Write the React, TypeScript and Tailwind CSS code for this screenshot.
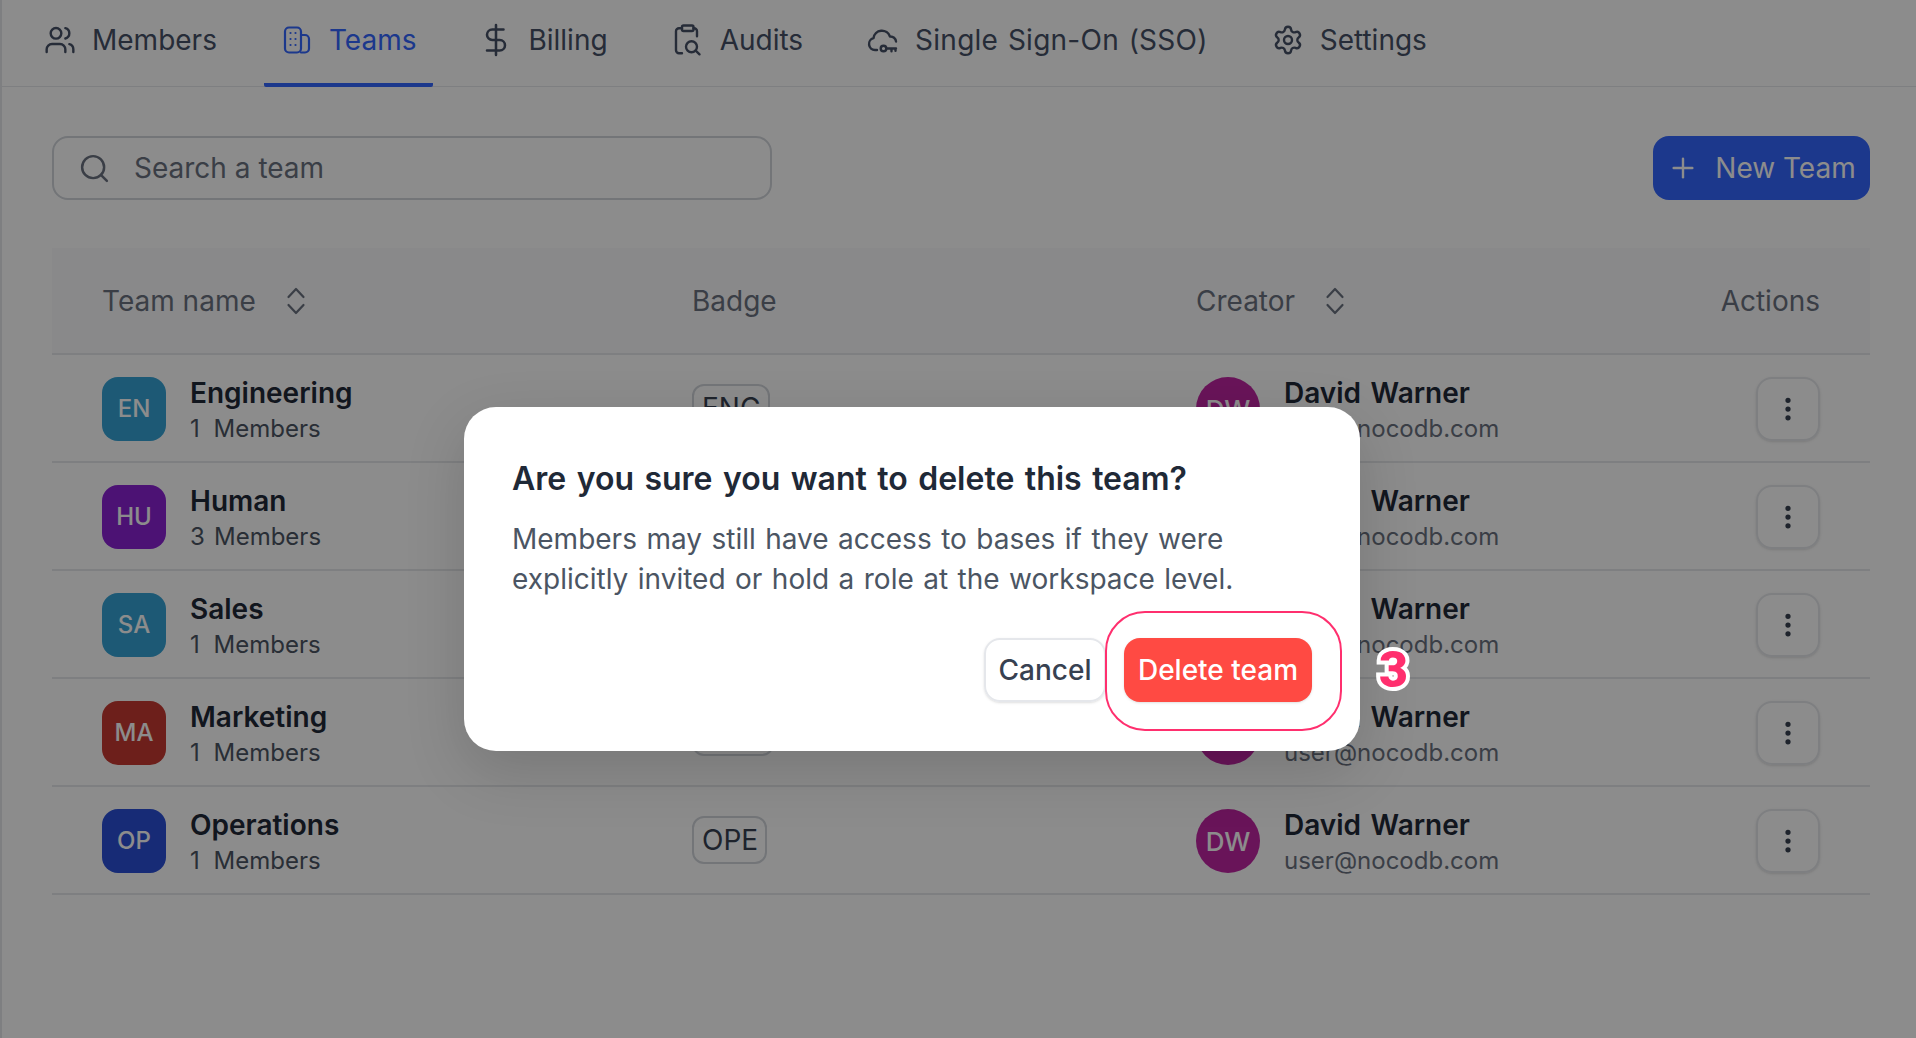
import React from "react";
import { Users, DollarSign, Settings, Search, Plus, MoreVertical } from "lucide-react";

const font = { fontFamily: "Inter, sans-serif" };

const BuildingIcon = () => (
  <svg width="32" height="32" viewBox="0 0 32 32" fill="none" stroke="currentColor" strokeWidth="2.2" strokeLinecap="round" strokeLinejoin="round">
    <rect x="4" y="3.5" width="16" height="25" rx="4" />
    <path d="M20 11h4a4 4 0 0 1 4 4v9.5a4 4 0 0 1-4 4h-4" />
    <path d="M9.5 9h.01M14.5 9h.01M9.5 15h.01M14.5 15h.01M9.5 21h.01M14.5 21h.01" />
  </svg>
);

const AuditIcon = () => (
  <svg width="32" height="32" viewBox="0 0 32 32" fill="none" stroke="currentColor" strokeWidth="2.4" strokeLinecap="round" strokeLinejoin="round">
    <rect x="10" y="1.5" width="11.5" height="5.5" rx="1.5" />
    <path d="M21.5 4.3H22a3 3 0 0 1 3 3v5" />
    <path d="M10 4.3H7a3 3 0 0 0-3 3v19a3 3 0 0 0 3 3h3" />
    <circle cx="19.5" cy="22.7" r="5.5" />
    <path d="M23.7 26.7l3.8 3.6" />
  </svg>
);

const CloudKeyIcon = () => (
  <svg width="32" height="32" viewBox="0 0 32 32" fill="none" stroke="currentColor" strokeWidth="2.4" strokeLinecap="round" strokeLinejoin="round">
    <path d="M10 26H8a6 6 0 0 1-1.5-11.8A8.5 8.5 0 0 1 23 12.5a5.5 5.5 0 0 1 6 5" />
    <circle cx="16.5" cy="24.5" r="2.8" />
    <path d="M19.5 24.5H29M24.5 24.5v2.8M28.5 24.5v2.2" />
  </svg>
);

const SortIcon = () => (
  <svg width="22" height="28" viewBox="0 0 22 28" fill="none" stroke="currentColor" strokeWidth="2.2" strokeLinecap="round" strokeLinejoin="round">
    <path d="M3.5 10L11 2l7.5 8M3.5 18l7.5 8 7.5-8" />
  </svg>
);

const tabs = [
  { label: "Members", icon: <Users size={32} strokeWidth={1.8} />, text: "" },
  { label: "Teams", icon: <BuildingIcon />, active: true, text: "" },
  { label: "Billing", icon: <DollarSign size={36} strokeWidth={1.7} className="-mx-[2px] -my-[2px]" />, text: "" },
  { label: "Audits", icon: <AuditIcon />, text: "" },
  { label: "Single Sign-On (SSO)", icon: <CloudKeyIcon />, text: "tracking-[0.25px]" },
  { label: "Settings", icon: <Settings size={32} strokeWidth={1.8} />, text: "" },
];

const rows = [
  { i: "EN", name: "Engineering", m: "1 Members", ws: "[word-spacing:7px]", color: "bg-[#36a3d6]", badge: "ENG" },
  { i: "HU", name: "Human", m: "3 Members", ws: "[word-spacing:2.4px]", color: "bg-[#8a22d4]", badge: "HUM" },
  { i: "SA", name: "Sales", m: "1 Members", ws: "[word-spacing:7px]", color: "bg-[#36a3d6]", badge: "SAL" },
  { i: "MA", name: "Marketing", m: "1 Members", ws: "[word-spacing:7px]", color: "bg-[#c73a32]", badge: "MAR" },
  { i: "OP", name: "Operations", m: "1 Members", ws: "[word-spacing:7px]", color: "bg-[#2a4fd8]", badge: "OPE" },
];

export default function App() {
  return (
    <div className="relative h-[1038px] w-[1916px] overflow-hidden bg-white" style={font}>
      <div className="h-full border-l-2 border-[#e5e7eb]">
        <nav className="flex h-[87px] items-stretch gap-[30px] border-b border-[#e5e7eb] pl-[25px] text-[28px] text-[#465066] [word-spacing:1.6px]">
          {tabs.map((t) => (
            <div
              key={t.label}
              className={`-mb-px flex items-center gap-[16px] rounded-b-[2px] border-b-4 px-[17px] pb-[3px] whitespace-nowrap ${
                t.active ? "border-[#3366ff] text-[#3366ff]" : "border-transparent"
              }`}
            >
              {t.icon}
              <span className={t.text}>{t.label}</span>
            </div>
          ))}
        </nav>
        <div className="mr-[46px] ml-[50px]">
          <div className="mt-[49px] flex items-center justify-between">
            <div className="flex h-[64px] w-[720px] items-center gap-[23px] rounded-[16px] border-2 border-[#d1d5db] pl-[24px] text-[28px] text-[#6b7280]">
              <Search size={33} strokeWidth={1.8} />
              <span>Search a team</span>
            </div>
            <div className="flex h-[64px] w-[217px] items-center justify-center gap-[16px] rounded-[16px] bg-[#3366ff] text-[28px] text-white">
              <Plus size={32} strokeWidth={1.8} />
              <span>New Team</span>
            </div>
          </div>
          <div className="mt-[48px]">
            <div className="flex h-[107px] items-center border-b-2 border-[#e5e7eb] bg-[#f9fafb] px-[50px] text-[28px] text-[#6b7280]">
              <div className="flex w-[590px] items-center gap-[29px]">
                <span>Team name</span>
                <SortIcon />
              </div>
              <div className="w-[504px]">Badge</div>
              <div className="flex flex-1 items-center gap-[29px]">
                <span>Creator</span>
                <SortIcon />
              </div>
              <div>Actions</div>
            </div>
            {rows.map((r) => (
              <div key={r.i} className="flex h-[108px] items-center border-b-2 border-[#e5e7eb] px-[50px] pt-[2px]">
                <div className="flex w-[590px] items-center gap-[24px]">
                  <div className={`flex h-[64px] w-[64px] items-center justify-center rounded-[16px] ${r.color} text-[24px] font-medium text-white`}>
                    {r.i}
                  </div>
                  <div>
                    <div className="text-[28px] leading-[40px] font-semibold text-[#1f2937]">{r.name}</div>
                    <div className={`text-[24px] leading-[32px] text-[#4b5563] ${r.ws}`}>{r.m}</div>
                  </div>
                </div>
                <div className="w-[504px]">
                  <span className="-mt-[2px] inline-block rounded-[12px] border-2 border-[#d1d5db] pr-[7px] pl-[8px] align-middle text-[28px] leading-[44px] text-[#374151]">
                    {r.badge}
                  </span>
                </div>
                <div className="flex flex-1 items-center gap-[24px]">
                  <div className="flex h-[64px] w-[64px] items-center justify-center rounded-full bg-[#c026a3] text-[26px] font-medium text-white">
                    DW
                  </div>
                  <div>
                    <div className="text-[28px] leading-[40px] font-semibold text-[#1f2937] [word-spacing:2.5px]">David Warner</div>
                    <div className="text-[24px] leading-[32px] text-[#6b7280]">user@nocodb.com</div>
                  </div>
                </div>
                <div className="flex h-[64px] w-[64px] items-center justify-center rounded-[16px] border-2 border-[#e5e7eb] text-[#374151] shadow-sm">
                  <MoreVertical size={30} strokeWidth={2.2} />
                </div>
              </div>
            ))}
          </div>
        </div>
      </div>

      <div className="absolute inset-0 bg-black/45" />

      <div className="absolute top-[407px] left-[464px] h-[344px] w-[896px] rounded-[32px] bg-white px-[48px] pt-[50px] shadow-[0_20px_60px_rgba(0,0,0,0.15)]">
        <h2 className="text-[32px] leading-[44px] font-semibold text-[#1f2937] [word-spacing:2.4px]">
          Are you sure you want to delete this team?
        </h2>
        <p className="mt-[18px] text-[28px] leading-[40px] text-[#4b5563] [word-spacing:1.6px]">
          Members may still have access to bases if they were
          <br />
          explicitly invited or hold a role at the workspace level.
        </p>
        <div className="mt-[39px] flex justify-end gap-[18px]">
          <div className="flex h-[64px] w-[122px] items-center justify-center rounded-[16px] border-2 border-[#e5e7eb] text-[28px] font-medium text-[#374151] shadow-sm">
            Cancel
          </div>
          <div className="flex h-[64px] w-[188px] items-center justify-center rounded-[16px] bg-[#ff4a43] text-[28px] font-medium text-white shadow-sm">
            Delete team
          </div>
        </div>
      </div>

      <div className="absolute top-[611px] left-[1105px] h-[120px] w-[237px] rounded-[40px] border-2 border-[#ff2f6e]" />
      <div
        className="absolute top-[640px] left-[1379px] text-[50px] leading-[60px] font-black text-[#ff2f6e] [-webkit-text-stroke:8px_white] [paint-order:stroke_fill]"
        style={{ fontFamily: "Roboto, sans-serif" }}
      >
        3
      </div>
    </div>
  );
}
